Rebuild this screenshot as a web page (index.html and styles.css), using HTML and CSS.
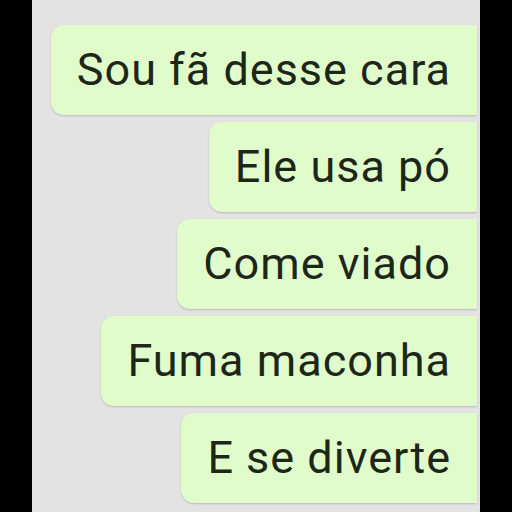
FILE: index.html
```html
<!DOCTYPE html>
<html>
<head>
<meta charset="utf-8">
<link rel="stylesheet" href="styles.css">
</head>
<body>
<div class="frame">
  <div class="chat">
    <div class="bubble">Sou fã desse cara</div>
    <div class="bubble">Ele usa pó</div>
    <div class="bubble">Come viado</div>
    <div class="bubble">Fuma maconha</div>
    <div class="bubble">E se diverte</div>
  </div>
</div>
</body>
</html>
```
FILE: styles.css
```css
html, body {
  margin: 0;
  padding: 0;
  background: #000;
  width: 512px;
  height: 512px;
  overflow: hidden;
}
.frame {
  margin-left: 32px;
  width: 448px;
  height: 512px;
  background: #e3e3e3;
}
.chat {
  display: flex;
  flex-direction: column;
  align-items: flex-end;
  gap: 7px;
  padding-top: 25px;
  padding-right: 3px;
}
.bubble {
  box-sizing: border-box;
  height: 90px;
  display: flex;
  align-items: center;
  padding: 0 26px 2px 26px;
  background: #e1fccb;
  border-radius: 13px 0 0 13px;
  box-shadow: 0 1px 2px rgba(0, 0, 0, 0.18);
  font-family: Roboto, "Noto Sans", sans-serif;
  font-size: 45px;
  letter-spacing: 1px;
  color: #1c271a;
  white-space: nowrap;
}
```
